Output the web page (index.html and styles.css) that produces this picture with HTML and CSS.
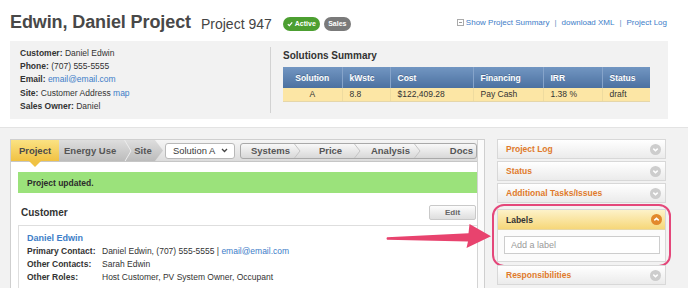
FILE: index.html
```html
<!DOCTYPE html>
<html lang="en">
<head>
    <meta charset="UTF-8">
    <meta name="viewport" content="width=device-width, initial-scale=1.0">
    <title>Edwin, Daniel Project</title>
    <link rel="stylesheet" href="styles.css">
</head>
<body>
    <header class="page-head">
        <h1>Edwin, Daniel Project</h1>
        <span class="project-no">Project 947</span>
        <span class="badge badge-active">
            <svg class="badge-check" viewBox="0 0 6 6" width="6" height="6"><path d="M0.8 3.2 L2.4 4.7 L5.2 1.3" fill="none" stroke="#fff" stroke-width="1.2"/></svg>
            Active
        </span>
        <span class="badge badge-sales">Sales</span>

        <nav class="head-links">
            <a href="#"><svg class="box-icon" viewBox="0 0 7 7" width="7" height="7"><rect x="0.5" y="0.5" width="6" height="6" fill="#fff" stroke="#aaa"/><path d="M2 3.5 H5" stroke="#999"/></svg>Show Project Summary</a>
            <span class="sep">|</span>
            <a href="#">download XML</a>
            <span class="sep">|</span>
            <a href="#">Project Log</a>
        </nav>
    </header>

    <section class="summary">
        <div class="summary-info">
            <p><b>Customer:</b> Daniel Edwin</p>
            <p><b>Phone:</b> (707) 555-5555</p>
            <p><b>Email:</b> <a href="#">email@email.com</a></p>
            <p><b>Site:</b> Customer Address <a href="#">map</a></p>
            <p><b>Sales Owner:</b> Daniel</p>
        </div>
        <div class="summary-divider"></div>
        <div class="summary-solutions">
            <h2>Solutions Summary</h2>
            <table class="solutions">
                <colgroup>
                    <col style="width:59px"><col style="width:48px"><col style="width:83px">
                    <col style="width:70px"><col style="width:59px"><col style="width:48px">
                </colgroup>
                <thead>
                    <tr><th>Solution</th><th>kWstc</th><th>Cost</th><th>Financing</th><th>IRR</th><th>Status</th></tr>
                </thead>
                <tbody>
                    <tr><td>A</td><td>8.8</td><td>$122,409.28</td><td>Pay Cash</td><td>1.38 %</td><td>draft</td></tr>
                </tbody>
            </table>
        </div>
    </section>

    <div class="workspace">
        <main class="panel">
            <div class="panel-body">
                <div class="tabbar">
                    <span class="tab-current">Project</span>
                    <div class="steps">
                        <span class="step step-energy">Energy Use</span>
                        <svg class="step-sep" viewBox="0 0 8 22" width="8" height="22"><polyline points="0.5,0 7,11 0.5,22" fill="none" stroke="#ececec"/></svg>
                        <span class="step step-site">Site</span>
                    </div>
                    <div class="select">
                        <span>Solution A</span>
                        <svg viewBox="0 0 7 5" width="7" height="5"><path d="M1 1 L3.5 3.5 L6 1" fill="none" stroke="#444" stroke-width="1.3"/></svg>
                    </div>
                    <div class="stepgroup">
                        <span class="group-step">Systems</span>
                        <svg class="group-sep" viewBox="0 0 7 14" width="7" height="14"><polyline points="0.5,0 6,7 0.5,14" fill="none" stroke="#c4c4c4"/></svg>
                        <span class="group-step">Price</span>
                        <svg class="group-sep" viewBox="0 0 7 14" width="7" height="14"><polyline points="0.5,0 6,7 0.5,14" fill="none" stroke="#c4c4c4"/></svg>
                        <span class="group-step">Analysis</span>
                        <svg class="group-sep" viewBox="0 0 7 14" width="7" height="14"><polyline points="0.5,0 6,7 0.5,14" fill="none" stroke="#c4c4c4"/></svg>
                        <span class="group-step group-last">Docs</span>
                    </div>
                </div>

                <div class="content">
                    <div class="notice">Project updated.</div>

                    <div class="section-head">
                        <h3>Customer</h3>
                        <button class="btn-edit">Edit</button>
                    </div>

                    <div class="customer-box">
                        <a href="#" class="customer-name">Daniel Edwin</a>
                        <dl class="customer-rows">
                            <dt>Primary Contact:</dt>
                            <dd>Daniel Edwin, (707) 555-5555 | <a href="#">email@email.com</a></dd>
                            <dt>Other Contacts:</dt>
                            <dd>Sarah Edwin</dd>
                            <dt>Other Roles:</dt>
                            <dd>Host Customer, PV System Owner, Occupant</dd>
                        </dl>
                    </div>
                </div>
            </div>
            <div class="panel-strip"></div>
        </main>

        <aside class="sidebar">
            <div class="acc">
                <span>Project Log</span>
                <svg class="acc-icon" viewBox="0 0 11 11" width="11" height="11"><circle cx="5.5" cy="5.5" r="5.5" fill="#cdcdcd"/><path d="M3.3 4.6 L5.5 6.8 L7.7 4.6" fill="none" stroke="#fff" stroke-width="1.5"/></svg>
            </div>
            <div class="acc">
                <span>Status</span>
                <svg class="acc-icon" viewBox="0 0 11 11" width="11" height="11"><circle cx="5.5" cy="5.5" r="5.5" fill="#cdcdcd"/><path d="M3.3 4.6 L5.5 6.8 L7.7 4.6" fill="none" stroke="#fff" stroke-width="1.5"/></svg>
            </div>
            <div class="acc">
                <span>Additional Tasks/Issues</span>
                <svg class="acc-icon" viewBox="0 0 11 11" width="11" height="11"><circle cx="5.5" cy="5.5" r="5.5" fill="#cdcdcd"/><path d="M3.3 4.6 L5.5 6.8 L7.7 4.6" fill="none" stroke="#fff" stroke-width="1.5"/></svg>
            </div>

            <div class="highlight">
                <div class="labels">
                    <div class="acc acc-open">
                        <span>Labels</span>
                        <svg class="acc-icon" viewBox="0 0 11 11" width="11" height="11"><circle cx="5.5" cy="5.5" r="5.5" fill="#e2892c"/><path d="M3.3 6.4 L5.5 4.2 L7.7 6.4" fill="none" stroke="#fff" stroke-width="1.5"/></svg>
                    </div>
                    <div class="labels-body">
                        <input type="text" placeholder="Add a label">
                    </div>
                </div>
            </div>

            <div class="acc acc-after">
                <span>Responsibilities</span>
                <svg class="acc-icon" viewBox="0 0 11 11" width="11" height="11"><circle cx="5.5" cy="5.5" r="5.5" fill="#cdcdcd"/><path d="M3.3 4.6 L5.5 6.8 L7.7 4.6" fill="none" stroke="#fff" stroke-width="1.5"/></svg>
            </div>
        </aside>
    </div>

    <!-- callout pointing at the labels box -->
    <svg class="callout-arrow" viewBox="384 220 110 32" width="110" height="32">
        <path d="M387 237.3 Q386 238.6 387 239.8 L468 241.5 L466.5 248 L491 236.2 L469.5 224 L468.5 233.2 Z" fill="#e8436e"/>
    </svg>
</body>
</html>
```

FILE: styles.css
```css
* {
    margin: 0;
    padding: 0;
    box-sizing: border-box;
    font-family: 'Liberation Sans', Arial, sans-serif;
}

body {
    background: #fff;
    color: #333;
    width: 688px;
    height: 288px;
    overflow: hidden;
    position: relative;
}

a {
    color: #3d7dc8;
    text-decoration: none;
}

/* header */

.page-head {
    display: flex;
    align-items: center;
    height: 41px;
    padding: 4px 21px 0 10px;
}

h1 {
    font-size: 18px;
    font-weight: bold;
    color: #484848;
    letter-spacing: -0.1px;
}

.project-no {
    font-size: 14px;
    color: #444;
    margin-left: 10px;
    margin-top: 2px;
}

.badge {
    display: inline-flex;
    align-items: center;
    justify-content: center;
    height: 14px;
    border-radius: 7px;
    color: #fff;
    font-size: 7px;
    font-weight: bold;
    margin-top: 2px;
}

.badge-active {
    width: 37px;
    margin-left: 11px;
    background: #4c9f31;
}

.badge-check {
    margin-right: 2px;
}

.badge-sales {
    width: 27px;
    margin-left: 4px;
    background: #7a7a7a;
}

.head-links {
    margin-left: auto;
    display: flex;
    align-items: center;
    font-size: 8px;
}

.head-links a {
    display: flex;
    align-items: center;
}

.box-icon {
    margin-right: 2px;
}

.sep {
    color: #6a8fc2;
    margin: 0 5px;
}

/* project summary */

.summary {
    display: flex;
    height: 78px;
    margin: 0 20px 0 10px;
    background: #f2f2f2;
}

.summary-info {
    width: 260px;
    padding: 6px 10px;
    font-size: 8.5px;
    line-height: 13.2px;
    color: #333;
}

.summary-divider {
    width: 1px;
    margin: 6px 0;
    background: #d2d2d2;
}

.summary-solutions {
    padding: 9px 0 0 12px;
}

h2 {
    font-size: 10px;
    line-height: 12px;
    color: #333;
}

.solutions {
    margin-top: 5px;
    width: 367px;
    border-collapse: collapse;
    table-layout: fixed;
    font-size: 8.5px;
}

.solutions th {
    height: 21px;
    padding: 0 7px;
    text-align: left;
    color: #fff;
    background: linear-gradient(#7296c2, #4c71a0);
    border-left: 1px solid #86a4ca;
    text-shadow: 0 -1px 0 rgba(0, 0, 0, 0.2);
}

.solutions td {
    height: 13px;
    padding: 0 7px;
    color: #333;
    background: #fce6a5;
    border-left: 1px solid #eedb9f;
    border-bottom: 1px solid #e5d6aa;
}

.solutions th:first-child,
.solutions td:first-child {
    text-align: center;
    border-left: none;
}

/* workspace */

.workspace {
    display: flex;
    gap: 12px;
    height: 161px;
    margin-top: 8px;
    padding: 11px 0 0 10px;
    background: #f2f2f2;
    border-top: 1px solid #e3e3e3;
}

.panel {
    display: flex;
    width: 475px;
    background: #fff;
    border: 1px solid #cfcfcf;
    border-bottom: none;
}

.panel-body {
    flex: 1;
}

.panel-strip {
    width: 7px;
    border-left: 1px solid #d4d4d4;
    background: #fbfbfb;
}

.tabbar {
    display: flex;
    align-items: center;
    height: 22px;
    background: linear-gradient(#f5f5f5, #dcdcdc);
    border-bottom: 1px solid #c6c6c6;
}

.tab-current {
    position: relative;
    display: flex;
    align-items: center;
    justify-content: center;
    width: 48px;
    height: 100%;
    background: linear-gradient(#fbe283, #f0c243);
    font-size: 9.5px;
    font-weight: bold;
    color: #4a4a4a;
}

.tab-current::after {
    content: '';
    position: absolute;
    top: 100%;
    left: 50%;
    margin-left: -6px;
    border-left: 6px solid transparent;
    border-right: 6px solid transparent;
    border-top: 6px solid #f0c243;
}

.steps {
    display: flex;
    align-items: center;
    width: 104px;
    height: 100%;
    background: linear-gradient(#dedede, #bcbcbc);
    clip-path: polygon(0 0, calc(100% - 8px) 0, 100% 50%, calc(100% - 8px) 100%, 0 100%);
}

.step {
    font-size: 9.5px;
    font-weight: bold;
    color: #555;
}

.step-energy {
    padding: 0 8px 0 5px;
}

.step-site {
    padding-left: 2px;
}

.select {
    display: flex;
    align-items: center;
    justify-content: space-between;
    width: 70px;
    height: 16px;
    margin-left: 2px;
    padding: 0 6px 0 7px;
    background: #fff;
    border: 1px solid #b8b8b8;
    border-radius: 3px;
    font-size: 9.4px;
    color: #3a3a3a;
}

.stepgroup {
    display: flex;
    align-items: center;
    width: 237px;
    height: 16px;
    margin-left: 5px;
    background: linear-gradient(#f8f8f8, #d8d8d8);
    border: 1px solid #a9a9a9;
    border-radius: 3px;
}

.group-step {
    width: 53px;
    padding-left: 6px;
    text-align: center;
    font-size: 9.5px;
    font-weight: bold;
    color: #555;
}

.group-last {
    flex: 1;
    padding: 0 3px 0 0;
    text-align: right;
}

.content {
    padding: 10px 0 0 7px;
}

.notice {
    display: flex;
    align-items: center;
    height: 21px;
    padding-left: 9px;
    background: #9be27b;
    font-size: 8.5px;
    font-weight: bold;
    color: #2b2b2b;
}

.section-head {
    display: flex;
    align-items: center;
    justify-content: space-between;
    margin-top: 12px;
    padding-left: 3px;
}

h3 {
    font-size: 10px;
    color: #333;
}

.btn-edit {
    width: 47px;
    height: 15px;
    margin-right: 1px;
    background: linear-gradient(#fdfdfd, #dedede);
    border: 1px solid #c9c9c9;
    border-radius: 2px;
    font-size: 8px;
    font-weight: bold;
    color: #666;
}

.customer-box {
    margin-top: 5px;
    padding: 6px 8px;
    border-top: 1px solid #dedede;
    border-left: 1px solid #dedede;
    font-size: 8.5px;
    line-height: 13px;
}

.customer-name {
    display: block;
    font-size: 9px;
    font-weight: bold;
}

.customer-rows {
    display: grid;
    grid-template-columns: 75px 1fr;
}

.customer-rows dt {
    font-weight: bold;
}

/* sidebar */

.sidebar {
    display: flex;
    flex-direction: column;
    gap: 2px;
    width: 169px;
}

.acc {
    display: flex;
    align-items: center;
    justify-content: space-between;
    height: 20px;
    padding: 0 4px 0 8px;
    background: linear-gradient(#fff, #ebebeb);
    border: 1px solid #d8d8d8;
    font-size: 8.5px;
    font-weight: bold;
    color: #e07a2b;
}

.highlight {
    margin: -1px -5px 0 -5px;
    padding: 3px;
    border: 2px solid #e4477a;
    border-radius: 12px;
}

.labels {
    background: #fbfbfb;
    border: 1px solid #d8d8d8;
}

.acc-open {
    border: none;
    border-bottom: 1px solid #e6d7a6;
    background: linear-gradient(#fdf2c9, #f6d779);
    color: #333;
    padding-right: 3px;
}

.labels-body {
    padding: 6px 5px 7px 6px;
}

.labels-body input {
    display: block;
    width: 100%;
    height: 18px;
    padding: 0 6px;
    border: 1px solid #cdcdcd;
    background: #fff;
    font-size: 9px;
    outline: none;
}

.labels-body input::placeholder {
    color: #9a9a9a;
}

.acc-after {
    margin-top: -4px;
}

.callout-arrow {
    position: absolute;
    left: 384px;
    top: 220px;
}
```
